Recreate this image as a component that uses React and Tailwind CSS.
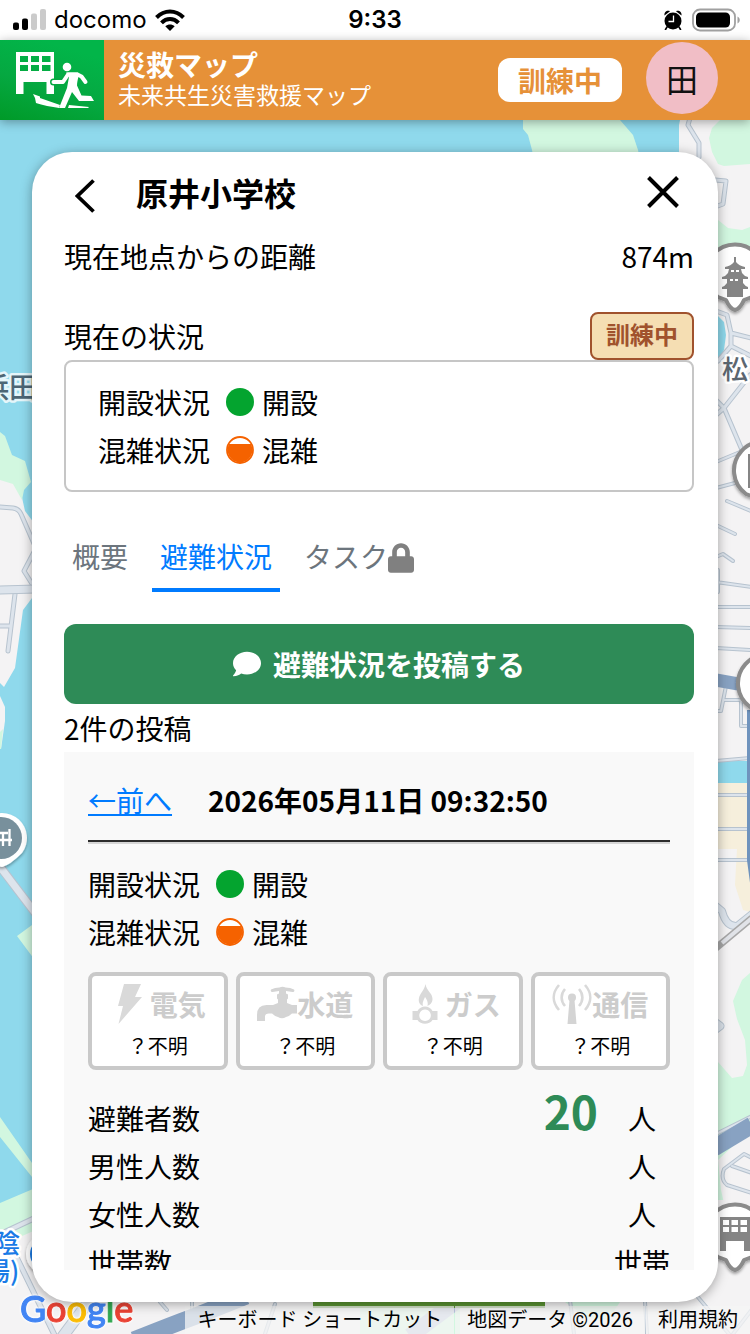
import React from "react";
import { FaComment, FaLock } from "react-icons/fa";

const utilities = [
  { name: "電気", Icon: BoltIcon },
  { name: "水道", Icon: TapIcon },
  { name: "ガス", Icon: GasIcon },
  { name: "通信", Icon: AntennaIcon },
];

const counts = [
  { label: "避難者数", value: "20", unit: "人" },
  { label: "男性人数", value: "", unit: "人" },
  { label: "女性人数", value: "", unit: "人" },
  { label: "世帯数", value: "", unit: "世帯" },
];

function BoltIcon() {
  return (
    <svg viewBox="0 0 40 40" className="size-10 shrink-0 fill-[#d9d9d9]" aria-hidden="true">
      <path d="M14 0h17l-6 13h7L8.500 40l4.500-18H8z" />
    </svg>
  );
}

function TapIcon() {
  return (
    <svg viewBox="0 0 40 40" className="size-10 shrink-0 fill-[#d4d4d4]" aria-hidden="true">
      <path d="M14 5.500q4-2 8.500-2 3-1.500 6 0 5 0 8.500 2c1 1.500 0 2.500-1.500 2.500L29 7v2.500l2 1v4l-1 1V19l5 2h5v8.500h-5q-3 3-6 3.500-4 2.500-8 0-3-.5-6-3.500h-3q-4 0-4 3V37H0v-6q0-10 9.500-10H16l5-2v-3.500l-1-1v-4l2-1V7l-6.500 1Q13 8 14 5.500z" />
    </svg>
  );
}

function GasIcon() {
  return (
    <svg viewBox="0 0 40 40" className="size-10 shrink-0 fill-[#d9d9d9]" aria-hidden="true">
      <path d="M20.500 0c1 7 7 9 7 15 0 4-3 6-5 7 1-4-1-7-2.500-9-1 3-3 5-2 9-3-1-5-4-4-8 1-5 5-7 6.500-14z" />
      <path
        fillRule="evenodd"
        d="M7.500 27h5c3-6 12-6 15 0h5v9h-5c-3 5-12 5-15 0h-5zm12.500-1.500a5.800 5.800 0 1 0 .1 0z"
      />
    </svg>
  );
}

function AntennaIcon() {
  return (
    <svg viewBox="0 0 40 40" className="size-10 shrink-0" aria-hidden="true">
      <g fill="none" stroke="#d9d9d9" strokeWidth="2.600">
        <path d="M7 1C0 9 0 18 7 26M33 1c7 8 7 17 0 25" />
        <path d="M13 5c-4.500 5-4.500 12 0 17M27 5c4.500 5 4.500 12 0 17" />
      </g>
      <path fill="#d4d4d4" d="M17.500 16h5l2 24h-9z" />
      <circle cx="20" cy="13.500" r="4" fill="#d4d4d4" />
    </svg>
  );
}

function AppLogo() {
  return (
    <svg viewBox="0 40 104 80" className="h-20 w-[104px] shrink-0" role="img" aria-label="災救マップ">
      <defs>
        <linearGradient id="logoGreen" x1="0" y1="1" x2="0.400" y2="0">
          <stop offset="0" stopColor="#009a28" />
          <stop offset="0.500" stopColor="#05a841" />
          <stop offset="1" stopColor="#02b549" />
        </linearGradient>
      </defs>
      <rect y="40" width="104" height="80" fill="url(#logoGreen)" />
      <path
        fill="#fff"
        fillRule="evenodd"
        d="M16 52h38v42h-7.500V82h-23v12H16zM20 56v6h8v-6zm11 0v6h8v-6zm11 0v6h8.500v-6zM20 65v6h8v-6zm11 0v6h8v-6zm11 0v6h8.500v-6z"
      />
      <path
        d="M53.500 82H63l5-7"
        fill="none"
        stroke="#05a841"
        strokeWidth="7"
        strokeLinejoin="round"
        strokeLinecap="round"
      />
      <circle cx="67" cy="67" r="4.300" fill="#fff" />
      <path
        d="M53.500 82H63l5-7.500h9.500l4 2L85.500 82"
        fill="none"
        stroke="#fff"
        strokeWidth="4"
        strokeLinejoin="round"
        strokeLinecap="round"
      />
      <path
        fill="#fff"
        d="M66 72.500h12c2 2-1 7-1 13l4.500 10 9.500.5 3 5-15 0-7-9-7 16h-6l8-20 2-11z"
      />
      <path fill="#fff" d="M33 94l7 2.500v1.500l20 7-1 3c-7-1-17-3-23-5l-1-5zM69 105l20 2-1 1H68z" />
    </svg>
  );
}

function StatusBar() {
  return (
    <div className="relative flex h-10 shrink-0 items-center justify-between bg-white pl-3 pr-2.5 font-['Inter',sans-serif] text-2xl leading-10 text-black">
      <div className="flex items-center gap-2">
        <svg viewBox="0 0 34 22" className="h-[22px] w-[34px]" aria-hidden="true">
          <rect x="1" y="13.500" width="6" height="7.500" rx="2" />
          <rect x="10" y="9.500" width="6" height="11.500" rx="2" />
          <rect x="19" y="4.500" width="6" height="16.500" rx="2" fill="#cbcbcb" />
          <rect x="28" y="0" width="6" height="21" rx="2" fill="#cbcbcb" />
        </svg>
        <span>docomo</span>
        <svg viewBox="0 0 30 22" className="h-[22px] w-[30px]" aria-hidden="true">
          <g fill="none" stroke="#000" strokeWidth="4">
            <path d="M1.500 8.500C9.500.5 20.500.5 28.500 8.500" />
            <path d="M6.500 13.800c5-5 12-5 17 0" />
          </g>
          <path d="M10.300 17.300c2.700-2.500 6.700-2.500 9.400 0L15 22z" />
        </svg>
      </div>
      <span className="absolute inset-x-0 text-center font-semibold">9:33</span>
      <div className="flex items-center gap-2.5">
        <svg viewBox="0 0 18 20" className="h-5 w-[18px]" aria-hidden="true">
          <circle cx="9" cy="11" r="8.500" />
          <path d="M.5 5.500C0 2 3 0 6 1.200zM17.500 5.500C18 2 15 0 12 1.200z" />
          <path d="M3 17l-1.500 2.500M15 17l1.500 2.500" stroke="#000" strokeWidth="1.600" strokeLinecap="round" />
          <path d="M9.500 5.500v6h-5" fill="none" stroke="#fff" strokeWidth="1.300" />
        </svg>
        <svg viewBox="0 0 48 24" className="h-6 w-12" aria-hidden="true">
          <rect x="1" y="1.500" width="42" height="21" rx="7" fill="none" stroke="#a0a0a0" strokeWidth="1.800" />
          <rect x="4" y="4.500" width="34" height="15" rx="4.500" />
          <path d="M45.500 8.500c3 1.500 3 5.500 0 7z" fill="#a0a0a0" />
        </svg>
      </div>
    </div>
  );
}

function Header() {
  return (
    <header className="relative z-10 flex h-20 shrink-0 items-center bg-[#e69138] pr-8 shadow-[0_2px_10px_rgba(0,0,0,0.35)]">
      <AppLogo />
      <div className="mb-1 ml-3.5 min-w-0 flex-1 whitespace-nowrap text-white">
        <h1 className="text-[28px] font-bold leading-8">災救マップ</h1>
        <p className="text-[23px] leading-7">未来共生災害救援マップ</p>
      </div>
      <span className="rounded-xl bg-white px-5 text-[28px] font-bold leading-[44px] text-[#e69138]">訓練中</span>
      <button
        type="button"
        className="mb-1 ml-6 flex size-[72px] items-center justify-center rounded-full bg-[#f1bec6] text-[32px] leading-none text-[#111111]"
      >
        田
      </button>
    </header>
  );
}

function MapPin({ x, y, children }) {
  return (
    <g transform={`translate(${x} ${y})`} filter="url(#pinShadow)">
      <path
        d="M-17 24A29 29 0 1 1 17 24L9 27Q5 36 0 37Q-5 36-9 27Z"
        fill="#fff"
        stroke="#8b8b8b"
        strokeWidth="4"
        strokeLinejoin="round"
      />
      {children}
    </g>
  );
}

function School() {
  return (
    <path
      fill="#858585"
      fillRule="evenodd"
      d="M-15-16h32v34h-8V8H-9v10h-6zM-12-13v5h6v-5zm8.500 0v5h6.500v-5zm9 0v5h6.500v-5zM-12-6v5h6v-5zm8.500 0v5h6.500v-5zm9 0v5h6.500v-5z"
    />
  );
}

function Road({ d, w = 5 }) {
  return (
    <g fill="none" strokeLinejoin="round" strokeLinecap="round">
      <path d={d} stroke="#b7c3cf" strokeWidth={w} />
      <path d={d} stroke="#dde4ec" strokeWidth={w - 2} />
    </g>
  );
}

function MapBackground() {
  return (
    <svg
      viewBox="0 120 750 1214"
      preserveAspectRatio="xMidYMin slice"
      className="absolute inset-0 size-full"
      role="img"
      aria-label="地図"
    >
      <defs>
        <filter id="pinShadow" x="-30%" y="-30%" width="160%" height="160%">
          <feDropShadow dx="0" dy="2" stdDeviation="1.500" floodOpacity="0.350" />
        </filter>
      </defs>
      <rect y="120" width="750" height="1214" fill="#8fd9ec" />

      <g fill="#f4f3f4">
        <path d="M679 120l2 10 5 7v1197H0v-94l40-20 640-60V120h70v1214H679z" />
        <path d="M0 478l13 5 8 10 4 18 15 20v62l-8 5-9 12-8 58-11 19-4-4z" />
        <path d="M0 696l5 11v14l-4 28H0z" />
      </g>

      <g fill="#d2f7e0">
        <path d="M523 120v9l5 6 4 15 4 20h106l-4-20-5-15-13-15z" />
        <path d="M720 120l-8 8-3 10 3 14 6 12 6 2 26-2v-44z" />
        <path d="M718 220l10 8 14 2 8-3v30h-32z" />
        <path d="M0 432l5 4 7 19 13 6 6 21-7 8-2 10-9-16-13-4z" />
        <path d="M0 732l3-3-2 20H0zM17 936l15-11 8-4v46z" />
        <path d="M0 1117l32 46v14L0 1137zM0 1203l40-17v42L0 1246z" />
        <path d="M750 973l-8 7-9 21 4 18 8 21 2 25-4 11-11 2-14-16v138h32z" />
        <path d="M360 1302h100v32H360zM565 1302h55l-12 18-20-2z" />
      </g>

      <path d="M718 1160l32-30v100h-20l-9-40z" fill="#f4f3f4" />
      <path d="M718 316l6 6 2 13-2 15-6 10zM718 761h29v22h-29z" fill="#8fd9ec" />
      <path d="M718 783h32v129l-7-2-8-25 2-36h-19z" fill="#f6efdc" />

      <Road d="M0 507l13 1q6 1 8 6l14 32M34 552l-10 19 10 16" />
      <Road d="M15 594L8 651M0 626h10" w={5} />
      <Road d="M0 590l36-1" w={9} />
      <Road d="M-2 864l38 50" w={9} />
      <Road d="M5 1232l32-15" w={6} />
      <Road d="M14 1252l41 84" w={6} />
      <Road d="M90 1300l-27 36" w={12} />

      <Road d="M690 118l-2 7 11 18v14M715 180l11 1-3 23-8 3" />
      <Road d="M716 311l11 4 4 18 20 5M731 333v13l-13 15M731 346l20 10M750 375l-26 33-8 7M716 400l8 8 18 42" />
      <Road d="M716 462l24-10M716 488l19-5M727 501l24 10M716 525l19 9M716 557l7-3 10 7" w={4} />
      <Road d="M718 570v22M716 582l36 5M716 607h36M716 627l36 1M716 648l36 2" w={4} />
      <Road d="M726 686l-5 25h-4M724 700h17v26h10M716 761l34-3M716 795h36M716 829h36M716 860h36" w={4} />
      <Road d="M716 906l6 5q4 16 15 15l15-12" w={8} />
      <path d="M716 948l36-30" stroke="#a7a7a7" strokeWidth="7" />
      <path d="M722 943l30-25" stroke="#e1e3e8" strokeWidth="4" />
      <Road d="M712 1020l8 6-8 6" w={9} />
      <Road d="M716 1134l36-18" w={4} />
      <Road d="M752 1158l-8-4-20 15q-4 10 3 16l25 8M732 1166l20 7" w={4} />
      <Road d="M697 1296l32 38M733 1334l20-26M160 1302l7 8M192 1302v9M265 1334l10-30M570 1300l4 34M645 1302l2 32" w={4} />
      <path d="M410 1336l48-36" stroke="#b9c3dc" strokeWidth="16" />

      <g stroke="#88a2c2" fill="none">
        <path d="M716 680l28 5" strokeWidth="13" />
        <path d="M749 710v150l4 30" strokeWidth="4" stroke="#6f93bd" />
        <path d="M714 1148l38-23" strokeWidth="17" />
        <path d="M134 1340q40-16 62-24l50-20" strokeWidth="17" />
      </g>
      <rect x="313" y="1300" width="232" height="8" fill="#5a9332" />

      <g
        className="font-['Noto_Sans_CJK_JP',sans-serif] font-medium"
        stroke="#fff"
        strokeWidth="5"
        strokeLinejoin="round"
        paintOrder="stroke"
      >
        <text x="-19" y="398" fontSize="28" fill="#4d6675" stroke="#e5f6fa">浜田</text>
        <text x="722" y="379" fontSize="26" fill="#5b6670">松</text>
        <text x="-6" y="1253" fontSize="26" fill="#1a7be6">陰</text>
        <text x="-16" y="1281" fontSize="26" fill="#1a7be6">場)</text>
      </g>

      <g filter="url(#pinShadow)">
        <path d="M-18 853A25 25 0 1 1 22 853Q10 865 2 867Q-8 865-18 853Z" fill="#fff" />
        <circle cx="1" cy="838" r="21" fill="#78909c" />
        <path d="M-10 833h18M-10 840h22M9.500 829v17M3 833v13" stroke="#fff" strokeWidth="2.300" />
        <circle cx="46" cy="1254" r="20" fill="#fff" />
        <circle cx="46" cy="1254" r="16" fill="#1a7be6" />
      </g>

      <MapPin x={735} y={273}>
        <path
          fill="#858585"
          d="M-1-16h2v5q3 4 9 5v2H6l1 4q2 3 6 4v2H8v4q2 3 5 4v2H8v8H-8v-8h-5v-2q3-1 5-4V6h-5V4q4-1 6-4l1-4h-4v-2q6-1 9-5z"
        />
        <path d="M-4-2h8M-5 7H5" stroke="#fff" strokeWidth="2" strokeDasharray="3 2" />
      </MapPin>
      <MapPin x={763} y={470}><School /></MapPin>
      <MapPin x={767} y={683} />
      <MapPin x={735} y={1233}><School /></MapPin>
    </svg>
  );
}

function CongestionMark() {
  return (
    <svg viewBox="0 0 28 28" className="size-7 shrink-0" aria-hidden="true">
      <circle cx="14" cy="14" r="13" fill="#fff" stroke="#f56200" strokeWidth="1.800" />
      <path d="M3.150 8h21.700a12.400 12.400 0 1 1-21.700 0z" fill="#f56200" />
    </svg>
  );
}

function Situation() {
  return (
    <dl className="text-[28px] leading-[48px]">
      <div className="flex items-center">
        <dt>開設状況</dt>
        <dd className="ml-4 flex items-center gap-2">
          <span className="size-7 rounded-full bg-[#04a42f]" />
          開設
        </dd>
      </div>
      <div className="flex items-center">
        <dt>混雑状況</dt>
        <dd className="ml-4 flex items-center gap-2">
          <CongestionMark />
          混雑
        </dd>
      </div>
    </dl>
  );
}

function Post() {
  return (
    <article className="min-h-0 flex-1 overflow-hidden bg-[#f9f9f9] p-6">
      <div className="flex items-center gap-9 leading-[48px]">
        <a href="#prev" className="text-[#007bff] underline">←前へ</a>
        <h3 className="font-bold">2026年05月11日 09:32:50</h3>
      </div>
      <hr className="my-4 border-b-2 border-t-2 border-b-[#d6d6d6] border-t-[#2c2c2c]" />
      <Situation />
      <ul className="mt-4 grid grid-cols-4 gap-2">
        {utilities.map(({ name, Icon }) => (
          <li key={name} className="rounded-lg border-4 border-[#c9c9c9] bg-white pb-1 pt-2">
            <div className="flex items-center justify-center font-bold leading-10 text-[#cccccc]">
              <Icon />
              {name}
            </div>
            <p className="mt-1.5 text-center text-xl leading-8">？不明</p>
          </li>
        ))}
      </ul>
      <dl className="mt-6">
        {counts.map(({ label, value, unit }) => (
          <div key={label} className="flex h-12 items-baseline leading-[48px]">
            <dt className="flex-1">{label}</dt>
            <dd className="flex items-baseline gap-4">
              {value && <strong className="text-[46px] font-bold leading-7 text-[#2e8b57]">{value}</strong>}
              <span className="w-14 text-center">{unit}</span>
            </dd>
          </div>
        ))}
      </dl>
    </article>
  );
}

function ShelterPanel() {
  return (
    <section className="relative z-10 m-8 flex min-h-0 flex-1 flex-col rounded-[40px] bg-white pb-8 pl-8 pr-6 text-[28px] text-black shadow-[0_2px_12px_rgba(0,0,0,0.35)]">
      <div className="flex h-20 shrink-0 items-center">
        <button type="button" aria-label="戻る" className="mr-[30px] flex h-12 w-[42px] items-center justify-center pt-2">
          <svg viewBox="0 0 20 34" className="h-[34px] w-5" aria-hidden="true">
            <path d="M18.500 1.500L2.500 17l16 15.500" fill="none" stroke="#000" strokeWidth="3.800" />
          </svg>
        </button>
        <h2 className="flex-1 text-[32px] font-bold leading-[48px]">原井小学校</h2>
        <button type="button" aria-label="閉じる" className="flex h-12 w-[62px] items-center justify-center">
          <svg viewBox="0 0 32 32" className="size-8" aria-hidden="true">
            <path d="M1.500 1.500l29 29M30.500 1.500l-29 29" stroke="#000" strokeWidth="4" />
          </svg>
        </button>
      </div>
      <div className="flex shrink-0 justify-between leading-[48px]">
        <span>現在地点からの距離</span>
        <span>874m</span>
      </div>
      <div className="mt-8 flex shrink-0 items-center justify-between leading-[48px]">
        <span>現在の状況</span>
        <span className="rounded-lg border-2 border-[#a0522d] bg-[#f5deb3] px-3.5 pb-1 text-2xl font-bold leading-10 text-[#a0522d]">
          訓練中
        </span>
      </div>
      <div className="shrink-0 rounded-lg border-2 border-[#c6c6c6] px-8 py-4">
        <Situation />
      </div>
      <nav className="mt-8 flex shrink-0 gap-4 leading-[64px] text-[#6c757d]">
        <a href="#summary" className="border-b-4 border-transparent px-2">概要</a>
        <a href="#evacuation" aria-current="page" className="border-b-4 border-[#007bff] px-2 text-[#007bff]">
          避難状況
        </a>
        <a href="#task" className="flex items-center border-b-4 border-transparent px-2">
          タスク
          <FaLock className="mt-1 h-[30px] w-[26px] text-[#808080]" aria-hidden="true" />
        </a>
      </nav>
      <button
        type="button"
        className="mt-8 flex h-20 shrink-0 items-center justify-center gap-3 rounded-xl bg-[#2e8b57] font-bold text-white"
      >
        <FaComment className="size-7" aria-hidden="true" />
        避難状況を投稿する
      </button>
      <p className="shrink-0 leading-[48px]">2件の投稿</p>
      <Post />
    </section>
  );
}

function Attribution() {
  return (
    <footer>
      <div className="absolute bottom-0 left-5 font-['Lato','Liberation_Sans',sans-serif] text-4xl font-medium leading-[52px] [-webkit-text-stroke:1px] [filter:drop-shadow(0_0_1px_#fff)_drop-shadow(0_0_1px_#fff)]">
        <span className="text-[#4285f4]">G</span>
        <span className="text-[#ea4335]">o</span>
        <span className="text-[#fbbc05]">o</span>
        <span className="text-[#4285f4]">g</span>
        <span className="text-[#34a853]">l</span>
        <span className="text-[#ea4335]">e</span>
      </div>
      <div className="absolute bottom-0 right-0 flex gap-px whitespace-nowrap font-['Roboto','Noto_Sans_CJK_JP',sans-serif] text-xl leading-7 text-black">
        <button type="button" className="bg-[#f5f5f5]/75 px-3">キーボード ショートカット</button>
        <span className="bg-[#f5f5f5]/75 px-3">地図データ ©2026</span>
        <a href="#terms" className="bg-[#f5f5f5]/75 px-3">利用規約</a>
      </div>
    </footer>
  );
}

export default function App() {
  return (
    <div lang="ja" className="flex h-screen flex-col overflow-hidden font-['Noto_Sans_CJK_JP',sans-serif]">
      <StatusBar />
      <Header />
      <main className="relative flex min-h-0 flex-1 flex-col">
        <MapBackground />
        <ShelterPanel />
        <Attribution />
      </main>
    </div>
  );
}
